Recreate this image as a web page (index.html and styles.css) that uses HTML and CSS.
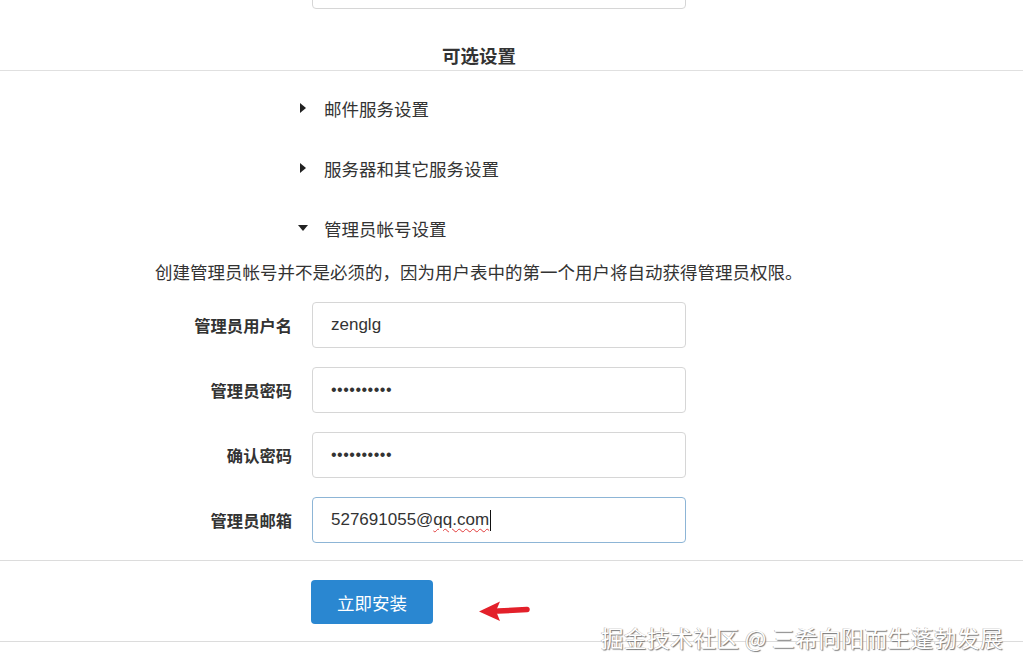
FILE: index.html
```html
<!DOCTYPE html>
<html lang="zh-CN">
<head>
<meta charset="utf-8">
<title>安装</title>
<link rel="stylesheet" href="styles.css">
</head>
<body>
<div class="page">
  <div class="row row-top">
    <div class="label"></div>
    <div class="field"></div>
  </div>

  <h2 class="section-title">可选设置</h2>

  <div class="details">
    <div class="summary"><span class="tri tri-right"></span>邮件服务设置</div>
    <div class="summary"><span class="tri tri-right"></span>服务器和其它服务设置</div>
    <div class="summary"><span class="tri tri-down"></span>管理员帐号设置</div>
  </div>

  <p class="desc">创建管理员帐号并不是必须的，因为用户表中的第一个用户将自动获得管理员权限。</p>

  <div class="form">
    <div class="row">
      <div class="label">管理员用户名</div>
      <div class="field">zenglg</div>
    </div>
    <div class="row">
      <div class="label">管理员密码</div>
      <div class="field dots">••••••••••</div>
    </div>
    <div class="row">
      <div class="label">确认密码</div>
      <div class="field dots">••••••••••</div>
    </div>
    <div class="row">
      <div class="label">管理员邮箱</div>
      <div class="field focus">527691055@<span class="spell">qq.com</span><span class="caret"></span></div>
    </div>
  </div>

  <div class="actions">
    <button class="btn" type="button">立即安装</button>
    <svg class="arrow" width="52" height="22" viewBox="0 0 52 22">
      <path d="M19 11 L48 9.5" stroke="#e3202a" stroke-width="5.5" stroke-linecap="round" fill="none"/>
      <path d="M0 11.5 L21 1.5 L17 11 L21 21 Z" fill="#e3202a"/>
    </svg>
  </div>

  <div class="watermark">掘金技术社区 @ 三希向阳而生蓬勃发展</div>
</div>
</body>
</html>
```

FILE: styles.css
```css
html, body {
  margin: 0;
  padding: 0;
  background: #fff;
}

body {
  font-family: "Liberation Sans", Arial, "Noto Sans CJK SC", sans-serif;
  color: #333;
  font-size: 16px;
}

.page {
  position: relative;
  width: 1023px;
  height: 671px;
  overflow: hidden;
}

.row {
  display: grid;
  grid-template-columns: 292px 374px;
  column-gap: 20px;
  align-items: center;
}

.row-top {
  margin-top: -37px;
}

.label {
  text-align: right;
  font-weight: bold;
  font-size: 16.3px;
  font-family: "Noto Sans CJK SC", sans-serif;
  color: #333;
}

.field {
  box-sizing: border-box;
  height: 46px;
  border: 1px solid #d6d6d6;
  border-radius: 4px;
  padding: 0 18px;
  display: flex;
  align-items: center;
  font-size: 17px;
  font-family: "Liberation Sans", Arial, sans-serif;
  color: #333;
  background: #fff;
}

.field.dots {
  font-size: 16px;
  letter-spacing: 0.5px;
}

.field.focus {
  border-color: #8db5d6;
}

.spell {
  text-decoration: underline wavy #e23b3b;
  text-decoration-thickness: 1px;
  text-underline-offset: 3px;
}

.caret {
  display: inline-block;
  width: 1px;
  height: 21px;
  background: #111;
  margin-left: 1px;
}

.section-title {
  margin: 31px 0 0;
  padding: 0 65px 0 0;
  box-sizing: border-box;
  height: 31px;
  text-align: center;
  font-size: 18.5px;
  font-weight: bold;
  line-height: 30px;
  font-family: "Noto Sans CJK SC", sans-serif;
  color: #333;
  border-bottom: 1px solid #e0e0e0;
}

.details {
  padding-left: 298px;
  margin-top: 7px;
}

.summary {
  display: flex;
  align-items: center;
  height: 60px;
  font-size: 17.5px;
  font-family: "Noto Sans CJK SC", sans-serif;
  color: #333;
}

.tri {
  display: inline-block;
  width: 0;
  height: 0;
}

.tri-right {
  border-top: 5px solid transparent;
  border-bottom: 5px solid transparent;
  border-left: 6px solid #222;
  margin-left: 2px;
  margin-right: 18px;
}

.tri-down {
  border-left: 5px solid transparent;
  border-right: 5px solid transparent;
  border-top: 6px solid #222;
  margin-right: 16px;
}

.desc {
  margin: 2px 0 0 155px;
  font-size: 17.5px;
  line-height: 24px;
  font-family: "Noto Sans CJK SC", sans-serif;
  color: #333;
}

.form {
  margin-top: 18px;
  display: flex;
  flex-direction: column;
  gap: 19px;
  padding-bottom: 17px;
  border-bottom: 1px solid #dcdcdc;
}

.actions {
  display: flex;
  align-items: center;
  padding: 19px 0 17px 311px;
  border-bottom: 1px solid #dcdcdc;
}

.btn {
  width: 122px;
  height: 44px;
  border: none;
  border-radius: 4px;
  background: #2a87d1;
  color: #fff;
  font-size: 17.5px;
  font-family: "Noto Sans CJK SC", sans-serif;
  padding: 0;
  cursor: pointer;
}

.arrow {
  margin-left: 46px;
  margin-top: 18px;
}

.watermark {
  position: absolute;
  right: 20px;
  top: 624px;
  font-size: 22.8px;
  line-height: 28px;
  font-family: "Noto Sans CJK SC", sans-serif;
  color: #fff;
  text-shadow: 1px 1px 1px #777, -0.5px -0.5px 0 #aaa;
  letter-spacing: 0.3px;
  white-space: nowrap;
}
```
